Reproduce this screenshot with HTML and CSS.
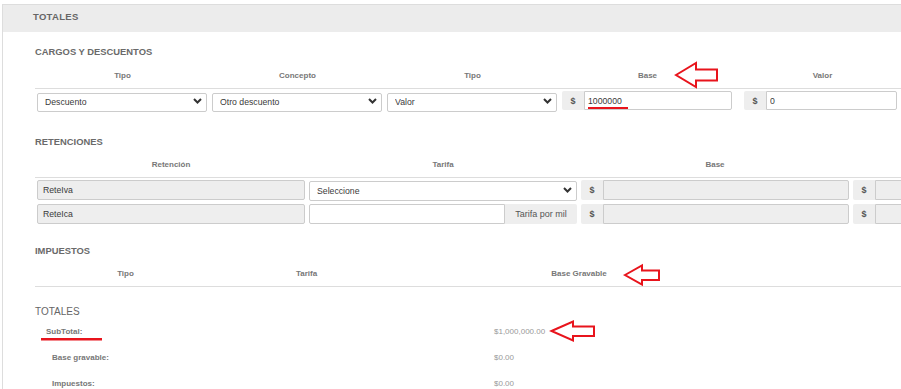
FILE: index.html
```html
<!DOCTYPE html>
<html lang="es">
<head>
  <meta charset="UTF-8">
  <meta name="viewport" content="width=device-width, initial-scale=1">
  <title>Totales</title>
  <link rel="stylesheet" href="styles.css">
</head>
<body>
<div class="panel">
  <div class="panel-heading">TOTALES</div>
  <div class="panel-body">

    <!-- CARGOS Y DESCUENTOS -->
    <div class="block cargos">
      <h4>CARGOS Y DESCUENTOS</h4>
      <div class="cols c5 head">
        <div>Tipo</div><div>Concepto</div><div>Tipo</div><div>Base</div><div>Valor</div>
      </div>
      <div class="cols c5 fields">
        <div class="cell">
          <div class="sel">
            <select><option>Descuento</option></select>
            <svg class="caret" width="9" height="6" viewBox="0 0 9 6"><polyline points="1,1 4.5,4.5 8,1"/></svg>
          </div>
        </div>
        <div class="cell">
          <div class="sel">
            <select><option>Otro descuento</option></select>
            <svg class="caret" width="9" height="6" viewBox="0 0 9 6"><polyline points="1,1 4.5,4.5 8,1"/></svg>
          </div>
        </div>
        <div class="cell">
          <div class="sel">
            <select><option>Valor</option></select>
            <svg class="caret" width="9" height="6" viewBox="0 0 9 6"><polyline points="1,1 4.5,4.5 8,1"/></svg>
          </div>
        </div>
        <div class="cell">
          <div class="group"><span class="addon">$</span><input type="text" value="1000000"></div>
        </div>
        <div class="cell last">
          <div class="group"><span class="addon">$</span><input type="text" value="0"></div>
        </div>
      </div>
    </div>

    <!-- RETENCIONES -->
    <div class="block retenciones">
      <h4>RETENCIONES</h4>
      <div class="cols c4 head">
        <div>Retención</div><div>Tarifa</div><div>Base</div><div></div>
      </div>
      <div class="cols c4 fields">
        <div class="cell"><input type="text" class="ro" value="ReteIva" readonly></div>
        <div class="cell">
          <div class="sel">
            <select><option>Seleccione</option></select>
            <svg class="caret" width="9" height="6" viewBox="0 0 9 6"><polyline points="1,1 4.5,4.5 8,1"/></svg>
          </div>
        </div>
        <div class="cell">
          <div class="group"><span class="addon">$</span><input type="text" class="ro" readonly></div>
        </div>
        <div class="cell">
          <div class="group"><span class="addon">$</span><input type="text" class="ro" readonly></div>
        </div>
      </div>
      <div class="cols c4 fields">
        <div class="cell"><input type="text" class="ro" value="ReteIca" readonly></div>
        <div class="cell">
          <div class="group"><input type="text" class="lead"><span class="addon text">Tarifa por mil</span></div>
        </div>
        <div class="cell">
          <div class="group"><span class="addon">$</span><input type="text" class="ro" readonly></div>
        </div>
        <div class="cell">
          <div class="group"><span class="addon">$</span><input type="text" class="ro" readonly></div>
        </div>
      </div>
    </div>

    <!-- IMPUESTOS -->
    <div class="block impuestos">
      <h4>IMPUESTOS</h4>
      <div class="cols c3 head">
        <div>Tipo</div><div>Tarifa</div><div>Base Gravable</div>
      </div>
    </div>

    <!-- TOTALES -->
    <div class="block totales">
      <h4>TOTALES</h4>
      <div class="sum-row first"><span class="lbl">SubTotal:</span><span class="val">$1,000,000.00</span></div>
      <div class="sum-row"><span class="lbl">Base gravable:</span><span class="val">$0.00</span></div>
      <div class="sum-row"><span class="lbl">Impuestos:</span><span class="val">$0.00</span></div>
    </div>

  </div>
</div>

<!-- marcas rojas sobre la captura -->
<svg class="marks" width="901" height="389" viewBox="0 0 901 389">
  <polygon points="676,75 696,63 696,69.5 717,69.5 717,80.5 696,80.5 696,87"/>
  <polygon points="625,275 642,265.5 642,270.5 659,270.5 659,280 642,280 642,284.5"/>
  <polygon points="551.5,331 573,321.5 573,326.5 594,326.5 594,336 573,336 573,340.5"/>
  <rect class="ul" x="588" y="107" width="40" height="2"/>
  <rect class="ul" x="41" y="338" width="61" height="2.5"/>
</svg>
</body>
</html>
```

FILE: styles.css
```css
* { box-sizing: border-box; }
html, body { margin: 0; }
body {
  font-family: "Liberation Sans", Arial, sans-serif;
  color: #555;
  background: #fff;
  width: 901px;
  height: 389px;
  overflow: hidden;
  position: relative;
}
input, select { font: inherit; color: #3a3a3a; }

.panel {
  margin: 4px 0 0 2px;
  height: 385px;
  overflow: hidden;
  border-top: 1px solid #ddd;
  border-left: 1px solid #ddd;
}
.panel-heading {
  height: 27px;
  line-height: 23px;
  padding-left: 30px;
  background: #ececec;
  color: #666;
  font-size: 9.5px;
  font-weight: bold;
  letter-spacing: .3px;
}
.panel-body { padding: 13px 0 0 32px; }

.block h4 {
  margin: 0;
  font-size: 9.4px;
  line-height: 14px;
  font-weight: bold;
  color: #6a6a6a;
}
.retenciones { margin-top: 25px; }
.impuestos { margin-top: 20px; }
.totales { margin-top: 18px; }
.totales h4 { font-size: 10px; font-weight: normal; color: #666; }

.cols { display: grid; }
.c5 { grid-template-columns: repeat(5, 175px); }
.c4 { grid-template-columns: repeat(4, 272px); }
.c3 { grid-template-columns: 181px 181px 364px; }

.head {
  margin-top: 11px;
  padding-bottom: 6px;
  border-bottom: 1px solid #ddd;
  font-size: 8px;
  line-height: 12px;
  font-weight: bold;
  color: #777;
  text-align: center;
}
.retenciones .head, .impuestos .head { margin-top: 10px; }

.fields { padding-top: 2px; }
.fields + .fields { padding-top: 4px; }
.cell { padding: 0 2px; height: 19px; }
.cargos .cell { padding: 0 3px 0 2px; }
.cargos .cell.last { padding: 0 13px 0 9px; }
.retenciones .cell { height: 20px; }

.sel { position: relative; height: 100%; }
.sel select {
  -webkit-appearance: none;
  appearance: none;
  width: 100%;
  height: 100%;
  margin: 0;
  padding: 0 16px 0 7px;
  border: 1px solid #ccc;
  border-radius: 2px;
  background: #fff;
  font-size: 8.7px;
}
.caret {
  position: absolute;
  right: 5px;
  top: 50%;
  margin-top: -3px;
  fill: none;
  stroke: #333;
  stroke-width: 2;
}

.group { display: flex; height: 100%; }
.addon {
  flex: 0 0 22px;
  display: flex;
  align-items: center;
  justify-content: center;
  background: #eee;
  border-radius: 2px 0 0 2px;
  font-size: 9px;
  font-weight: bold;
  color: #555;
}
.addon.text {
  flex: 0 0 72px;
  font-weight: normal;
  border-radius: 0 2px 2px 0;
}
input {
  display: block;
  width: 100%;
  height: 100%;
  margin: 0;
  padding: 0 3px;
  border: 1px solid #ccc;
  border-radius: 2px;
  background: #fff;
  font-size: 8.7px;
  outline: none;
}
.group input { flex: 1; min-width: 0; border-radius: 0 2px 2px 0; }
.group input.lead { border-radius: 2px 0 0 2px; }
input.ro { background: #eee; padding-left: 5px; }

.sum-row {
  display: grid;
  grid-template-columns: 459px 1fr;
  font-size: 8px;
  line-height: 12px;
  margin-top: 14px;
}
.sum-row.first { margin-top: 7px; }
.sum-row .lbl { padding-left: 17px; font-weight: bold; color: #777; }
.sum-row.first .lbl { padding-left: 11px; }
.sum-row .val { color: #999; }

.marks {
  position: absolute;
  left: 0;
  top: 0;
  pointer-events: none;
}
.marks polygon { fill: none; stroke: #e8141c; stroke-width: 2; stroke-linejoin: miter; }
.marks .ul { fill: #e8141c; }
```
